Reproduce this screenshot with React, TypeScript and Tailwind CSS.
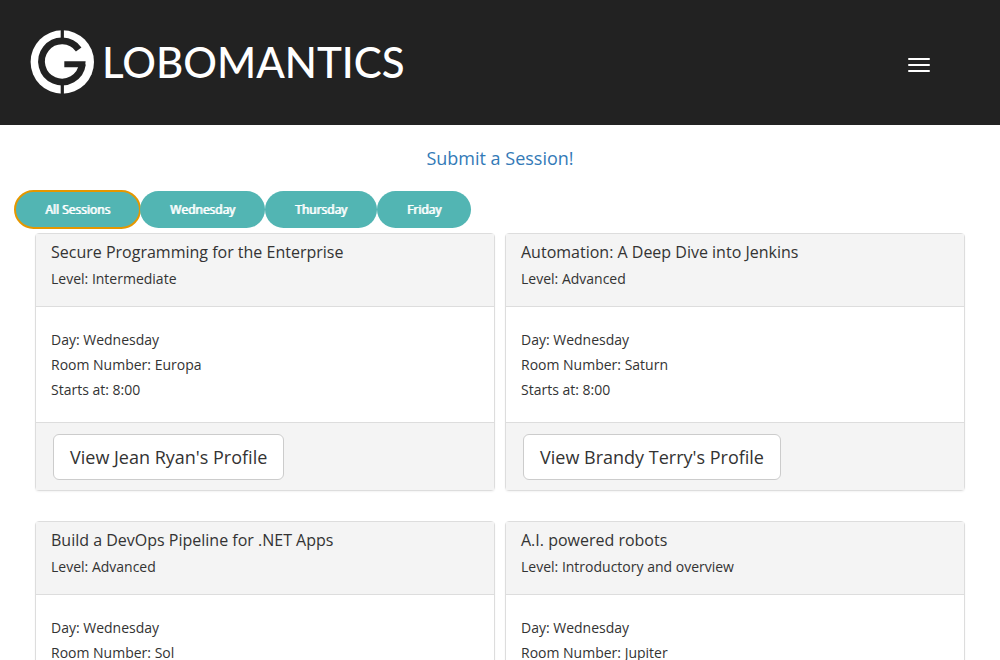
const days = ['All Sessions', 'Wednesday', 'Thursday', 'Friday'];

type Session = {
  title: string;
  level: string;
  day: string;
  room: string;
  start?: string;
  speaker?: string;
};

const sessions: Session[] = [
  { title: 'Secure Programming for the Enterprise', level: 'Intermediate', day: 'Wednesday', room: 'Europa', start: '8:00', speaker: 'Jean Ryan' },
  { title: 'Automation: A Deep Dive into Jenkins', level: 'Advanced', day: 'Wednesday', room: 'Saturn', start: '8:00', speaker: 'Brandy Terry' },
  { title: 'Build a DevOps Pipeline for .NET Apps', level: 'Advanced', day: 'Wednesday', room: 'Sol' },
  { title: 'A.I. powered robots', level: 'Introductory and overview', day: 'Wednesday', room: 'Jupiter' },
];

function Logo() {
  return (
    <a href="#" className="flex items-center gap-2 text-white">
      <svg className="size-16" viewBox="0 0 64 64" aria-hidden="true">
        <circle cx="32.300" cy="32" r="31.700" fill="#fff" />
        <path d="M30.700 0h3.200v10h-3.200zM30.700 54h3.200v10h-3.200z" fill="#222" />
        <path d="M48.700 19.500A20.500 20.500 0 1 0 52.400 34" fill="none" stroke="#222" strokeWidth="6.800" />
        <path d="M34.300 31.200H55.600L55 37.300H34.300z" fill="#222" />
      </svg>
      <span className="font-[Lato,sans-serif] text-[42px] leading-none font-medium">LOBOMANTICS</span>
    </a>
  );
}

function SessionCard({ session }: { session: Session }) {
  return (
    <article className="rounded-sm border border-[#ddd] bg-white shadow-xs">
      <header className="border-b border-[#ddd] bg-[#f4f4f4] px-[15px] pt-1 pb-[15px]">
        <h3 className="text-base leading-7">{session.title}</h3>
        <p className="leading-[25px]">Level: {session.level}</p>
      </header>
      <div className="px-[15px] py-5 leading-[25px]">
        <p>Day: {session.day}</p>
        <p>Room Number: {session.room}</p>
        {session.start && <p>Starts at: {session.start}</p>}
      </div>
      {session.speaker && (
        <footer className="border-t border-[#ddd] bg-[#f4f4f4] px-[17px] pt-[11px] pb-[10px]">
          <button type="button" className="rounded-md border border-[#ccc] bg-white px-4 py-[10px] text-lg leading-6">
            View {session.speaker}'s Profile
          </button>
        </footer>
      )}
    </article>
  );
}

export default function App() {
  return (
    <div className="min-h-screen bg-white font-['Open_Sans',sans-serif] text-sm text-[#333]">
      <nav className="flex h-[125px] items-center justify-between bg-[#222] pr-[70px] pb-0.5 pl-[30px]">
        <Logo />
        <button type="button" aria-label="Toggle navigation" className="mt-1.5 flex flex-col gap-1">
          <span className="h-0.5 w-[22px] rounded-[1px] bg-white" />
          <span className="h-0.5 w-[22px] rounded-[1px] bg-white" />
          <span className="h-0.5 w-[22px] rounded-[1px] bg-white" />
        </button>
      </nav>
      <main>
        <p className="pt-5 text-center text-lg leading-[26px]">
          <a href="#" className="text-[#337ab7]">Submit a Session!</a>
        </p>
        <div className="mt-5 flex px-[15px]">
          {days.map((day, i) => (
            <button
              key={day}
              type="button"
              className={`rounded-full bg-[#52b5b3] px-[30px] py-[10px] text-xs leading-[17px] text-white [text-shadow:1px_0_currentColor] ${i === 0 ? 'outline-2 outline-offset-[-1px] outline-[#e59700]' : ''}`}
            >
              {day}
            </button>
          ))}
        </div>
        <div className="mt-[5px] grid grid-cols-2 gap-x-[10px] gap-y-[30px] px-[35px]">
          {sessions.map((session) => (
            <SessionCard key={session.title} session={session} />
          ))}
        </div>
      </main>
    </div>
  );
}
